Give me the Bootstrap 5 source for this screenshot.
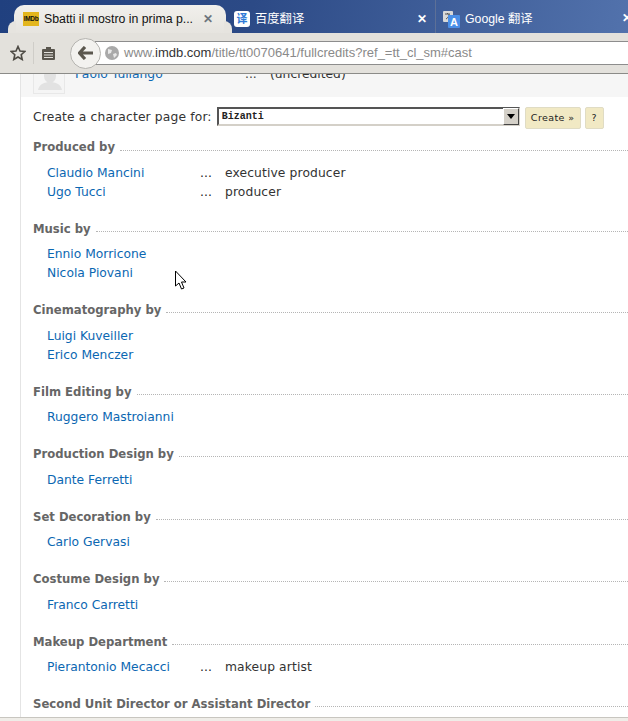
<!DOCTYPE html>
<html lang="it"><head><meta charset="utf-8"><title>IMDb</title>
<link rel="stylesheet" href="https://cdn.jsdelivr.net/npm/bootstrap@5.3.0/dist/css/bootstrap.min.css">
<style>
html,body{height:721px;overflow:hidden;background:#fff}
body{font-family:"DejaVu Sans","Liberation Sans",sans-serif;color:#333}
.shell{height:721px;overflow:hidden;position:relative}
.tabstrip{height:33px;background:linear-gradient(100deg,#20407f 0%,#2c4a86 40%,#5272ac 100%);font-family:"Liberation Sans","Noto Sans CJK SC",sans-serif;font-size:12.3px;padding-left:14px;color:#e9eef7;position:relative;overflow:hidden}
.tabitem{height:33px;gap:5px;padding-top:5px}
.tabactive{width:212px;height:28px;margin-top:5px;padding:0 13px 0 9px;background:linear-gradient(#f1f0ec,#e6e4df);color:#111;border-radius:10px 10px 0 0;position:relative;flex:none}
.tabactive::before,.tabactive::after{content:"";position:absolute;bottom:0;width:8px;height:12px;background:#e6e4df}
.tabactive::before{left:-6px;border-radius:8px 0 0 0}
.tabactive::after{right:-6px;border-radius:0 8px 0 0}
.tabtitle{flex:1;white-space:nowrap;overflow:hidden;padding-top:1px}
.tabx{font-weight:700;font-size:12px;line-height:1}
.favimdb{width:16px;height:14px;background:#e3b61d;color:#111;font-family:"Liberation Sans",sans-serif;font-weight:700;font-size:6.5px;letter-spacing:-.3px;line-height:14px;text-align:center;flex:none}
.favbaidu{width:16px;height:16px;border-radius:3px;background:#fff;color:#2f7bd8;font-size:11px;font-weight:700;line-height:16px;text-align:center;flex:none}
.taboff{width:210px;padding:5px 8px 0 8px;border-right:1px solid #5d7097;flex:none}
.taboff2{padding-left:7px;width:170px;flex:none;gap:5px}
.edgex{position:absolute;left:622px;top:12px}
.toolbar{height:41px;background:#e3e1dc;border-bottom:1px solid #8b8b88;padding-left:10px}
.sep{width:1px;height:22px;background:#cfcdc8;margin:0 7px}
.backbtn{width:31px;height:31px;border-radius:50%;background:#f3f2ef;border:1px solid #b5b4b0;position:relative;z-index:1;margin-left:14px;flex:none}
.urlbar{height:24px;flex:1;background:#fff;border:1px solid #8d8d8d;border-width:1px 0 1px 1px;margin-left:-6px;padding-left:9px;font-family:"Liberation Sans",sans-serif;font-size:13px;color:#8a8a8a;white-space:nowrap;gap:1px}
.urlbar b{font-weight:400;color:#333}
.pagearea{margin-left:20px;border-left:1px solid #e4e4e4;padding-left:12px;height:647px;overflow:hidden;font-size:12.3px}
.castrow{height:23px;margin-left:-12px;padding-left:12px;background:#f6f6f6;overflow:hidden}
.avatar{width:32px;height:20px;border:1px solid #e8e8e8;border-top:0;background:#f5f5f5;flex:none;overflow:hidden}
.castname{width:170px;margin:-7px 0 0 10px;line-height:14px;color:#0b67b2;font-size:12.3px;white-space:nowrap;flex:none}
.castdots{width:25px;margin-top:-7px;line-height:14px;color:#444;flex:none}
.castrole{margin-top:-7px;line-height:14px;color:#333;white-space:nowrap}
.createform{margin-top:10px;height:22px;gap:4px;font-size:12.3px;letter-spacing:.15px}
.formlabel{margin-bottom:2px}
.selbox{width:303px;height:19px;border:2px solid;border-color:#555 #d4d0c8 #d4d0c8 #555;font-family:"Liberation Mono","DejaVu Sans Mono",monospace;font-size:10px;font-weight:700;padding-left:3px;line-height:15px;letter-spacing:0;color:#222;position:relative;margin-left:1px;margin-bottom:3px}
.selarrow{position:absolute;right:-1px;top:-1px;width:16px;height:17px;background:#d4d0c8;border:1px solid;border-color:#fff #444 #444 #fff}
.selarrow::after{content:"";position:absolute;left:3px;top:5px;border:4px solid transparent;border-top:5px solid #000;border-bottom:0}
.imbtn{height:22px;background:#f1e9c4;border:1px solid #e0dcc4;border-radius:2px;font-size:9.5px;line-height:20px;color:#222;letter-spacing:.4px;text-align:center;padding:0}
.createbtn{margin-left:1px;width:56px}
.helpbtn{width:19px}
.credithead{display:flex;align-items:center;gap:5px;height:18px;font-weight:700;font-size:11.65px;color:#666;white-space:nowrap}
.credithead::after{content:"";flex:1;border-top:1px dotted #b5b5b5;margin-top:4px}
.section{margin-bottom:18.8px}
.firsthead{margin-top:10px}
.creditrows{padding:6.7px 0 0 14px}
.creditrow{display:flex;height:19px;line-height:19px;font-size:12.3px;letter-spacing:.12px}
.personname{width:153px;color:#0b67b2;text-decoration:none;letter-spacing:0}
.dotsep{width:25px;color:#222}
.rolename{color:#333}
.cursorsvg{position:absolute;left:174px;top:270px;z-index:3}
.statusline{position:absolute;left:0;right:0;top:717px;height:4px;background:#efede8;border-top:1px solid #c8c6c0;z-index:2}
</style></head>
<body><div class="shell">
<div class="tabstrip d-flex align-items-start">
 <div class="tabactive d-flex align-items-center tabitem" style="padding-top:0">
  <span class="favimdb">IMDb</span>
  <span class="tabtitle">Sbatti il mostro in prima p...</span>
  <span class="tabx text-secondary">✕</span>
 </div>
 <div class="taboff d-flex align-items-center tabitem">
  <span class="favbaidu">译</span>
  <span class="flex-grow-1 text-white">百度翻译</span>
  <span class="tabx text-white">✕</span>
 </div>
 <div class="taboff2 d-flex align-items-center tabitem">
  <svg width="17" height="17" viewBox="0 0 17 17"><rect x="0" y="0" width="10" height="11" rx="1" fill="#d9d9d9"/><path d="M2 3h5M4.500 2v1M3 8c2-1 3-3 3-5" stroke="#555" fill="none"/><rect x="5" y="4" width="12" height="13" rx="1" fill="#4a8fe8"/><text x="11" y="15" font-size="11" font-family="Liberation Sans" font-weight="700" fill="#fff" text-anchor="middle">A</text></svg>
  <span class="text-white">Google 翻译</span>
 </div>
 <span class="tabx text-white edgex">✕</span>
</div>
<div class="toolbar d-flex align-items-center">
 <svg width="16" height="16" viewBox="0 0 16 16"><path d="M8 1.500l2 4.500 4.800.5-3.600 3.200 1 4.800L8 12l-4.200 2.500 1-4.800L1.200 6.500 6 6z" fill="none" stroke="#4d4a44" stroke-width="1.600"/></svg>
 <div class="sep"></div>
 <svg width="15" height="15" viewBox="0 0 15 15"><rect x="1" y="3" width="13" height="11" rx="1" fill="#5a564e"/><rect x="5" y="1" width="5" height="3" fill="#5a564e"/><path d="M3 6.500h9M3 9h9M3 11.500h9" stroke="#e3e1dc"/></svg>
 <div class="backbtn d-flex align-items-center justify-content-center">
  <svg width="16" height="14" viewBox="0 0 16 14"><path d="M7 1L1.500 7 7 13M2 7h13" fill="none" stroke="#5b574e" stroke-width="3.200"/></svg>
 </div>
 <div class="urlbar d-flex align-items-center">
  <svg width="14" height="14" viewBox="0 0 14 14"><circle cx="7" cy="7" r="7" fill="#a9a9a9"/><path d="M3 3l4 1-1 3-3 1zM8 8l3-1 1 2-3 3z" fill="#e8e8e8"/></svg>
  <span class="ms-1">www.<b>imdb.com</b>/title/tt0070641/fullcredits?ref_=tt_cl_sm#cast</span>
 </div>
</div>
<div class="pagearea">
 <div class="castrow d-flex">
  <div class="avatar"><svg width="32" height="20" viewBox="0 0 32 20"><ellipse cx="16" cy="2" rx="6" ry="7" fill="#e2e2e2"/><path d="M4 16c1-6 7-8 12-8s11 2 12 8z" fill="#e2e2e2"/></svg></div>
  <span class="castname">Paolo Tullango</span>
  <span class="castdots">...</span>
  <span class="castrole">(uncredited)</span>
 </div>
 <div class="createform d-flex align-items-center">
  <span class="formlabel">Create a character page for:</span>
  <div class="selbox">Bizanti<span class="selarrow"></span></div>
  <span class="imbtn createbtn">Create »</span>
  <span class="imbtn helpbtn">?</span>
 </div>

 <div class="section firsthead"><div class="credithead">Produced by</div><div class="creditrows">
  <div class="creditrow"><a class="personname" href="#">Claudio Mancini</a><span class="dotsep">...</span><span class="rolename">executive producer</span></div>
  <div class="creditrow"><a class="personname" href="#">Ugo Tucci</a><span class="dotsep">...</span><span class="rolename">producer</span></div>
 </div></div>
 <div class="section"><div class="credithead">Music by</div><div class="creditrows">
  <div class="creditrow"><a class="personname" href="#">Ennio Morricone</a></div>
  <div class="creditrow"><a class="personname" href="#">Nicola Piovani</a></div>
 </div></div>
 <div class="section"><div class="credithead">Cinematography by</div><div class="creditrows">
  <div class="creditrow"><a class="personname" href="#">Luigi Kuveiller</a></div>
  <div class="creditrow"><a class="personname" href="#">Erico Menczer</a></div>
 </div></div>
 <div class="section"><div class="credithead">Film Editing by</div><div class="creditrows">
  <div class="creditrow"><a class="personname" href="#">Ruggero Mastroianni</a></div>
 </div></div>
 <div class="section"><div class="credithead">Production Design by</div><div class="creditrows">
  <div class="creditrow"><a class="personname" href="#">Dante Ferretti</a></div>
 </div></div>
 <div class="section"><div class="credithead">Set Decoration by</div><div class="creditrows">
  <div class="creditrow"><a class="personname" href="#">Carlo Gervasi</a></div>
 </div></div>
 <div class="section"><div class="credithead">Costume Design by</div><div class="creditrows">
  <div class="creditrow"><a class="personname" href="#">Franco Carretti</a></div>
 </div></div>
 <div class="section"><div class="credithead">Makeup Department</div><div class="creditrows">
  <div class="creditrow"><a class="personname" href="#">Pierantonio Mecacci</a><span class="dotsep">...</span><span class="rolename">makeup artist</span></div>
 </div></div>
 <div class="section"><div class="credithead">Second Unit Director or Assistant Director</div></div>
</div>
<svg class="cursorsvg" width="14" height="21" viewBox="0 0 14 21"><path d="M1.500 1v15l3.500-3 2.500 6 2.500-1-2.500-6h4.500z" fill="#fff" stroke="#000"/></svg>
<div class="statusline"></div>
</div>
<script src="https://cdn.jsdelivr.net/npm/bootstrap@5.3.0/dist/js/bootstrap.bundle.min.js"></script>
</body></html>
